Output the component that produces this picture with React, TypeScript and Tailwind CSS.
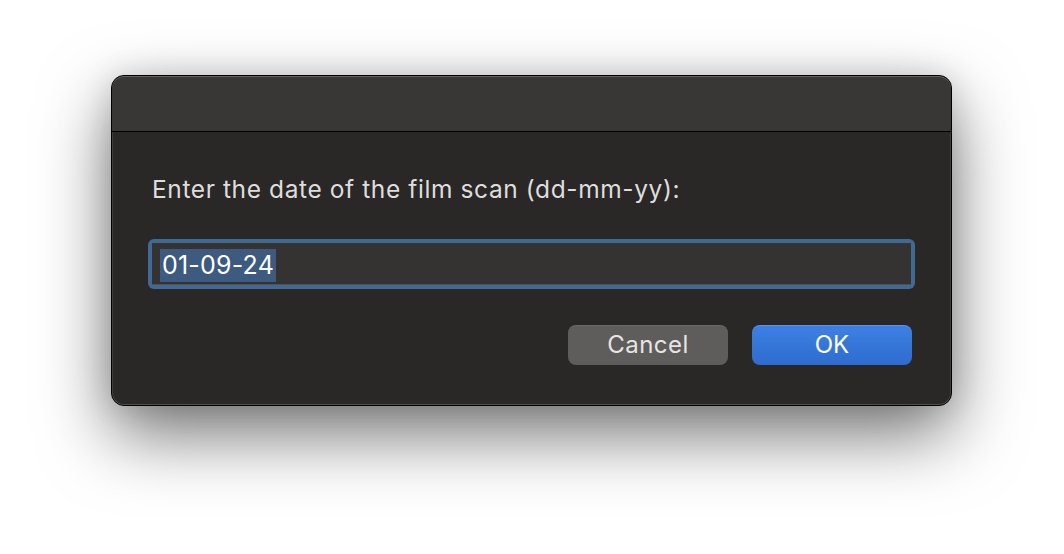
import React from "react";

export default function App() {
  return (
    <div className="w-[1064px] h-[554px] bg-white overflow-hidden pt-[75px] pl-[111px]" style={{ fontFamily: 'Inter, "Liberation Sans", Arial, sans-serif' }}>
      <div className="w-[841px] h-[331px] rounded-[13px] border border-black bg-[#292827] shadow-[0_28px_70px_rgba(0,0,0,0.55),0_0_30px_rgba(0,0,0,0.12)] flex flex-col overflow-hidden">
        <div className="h-[56px] shrink-0 bg-[#383736] border-b border-black rounded-t-[12px] shadow-[inset_0_1px_0_rgba(255,255,255,0.22)]"></div>
        <div className="flex-1 flex flex-col px-[36px] rounded-b-[12px] shadow-[inset_1px_0_0_rgba(255,255,255,0.1),inset_-1px_0_0_rgba(255,255,255,0.1),inset_0_-1px_0_rgba(255,255,255,0.18)]">
          <div className="mt-[43px] h-[28px] leading-[28px] text-[24.5px] tracking-[0.6px] text-[#dedddc] pl-[4px]">
            Enter the date of the film scan (dd-mm-yy):
          </div>
          <div className="mt-[36px] h-[50px] rounded-[6px] bg-[#3f6a96] p-[4px]">
            <div className="h-full bg-[#343332] shadow-[inset_0_-1px_0_rgba(255,255,255,0.15)] flex items-center pl-[8px]">
              <span className="bg-[#3d5a80] text-white text-[25px] tracking-[0.2px] leading-[33px] h-[33px] px-[2px] mt-[3px]">01-09-24</span>
            </div>
          </div>
          <div className="mt-[36px] flex justify-end gap-[24px] pr-[3px]">
            <button className="w-[160px] h-[40px] rounded-[8px] bg-[#5e5d5b] text-[#e6e5e4] text-[24px] tracking-[0.5px] leading-[40px] shadow-[inset_0_1px_0_rgba(255,255,255,0.08)]">
              Cancel
            </button>
            <button className="w-[160px] h-[40px] rounded-[8px] bg-gradient-to-b from-[#3d80e3] to-[#2f6ccf] text-white text-[24px] leading-[40px] shadow-[inset_0_1px_0_rgba(255,255,255,0.15)]">
              OK
            </button>
          </div>
        </div>
      </div>
    </div>
  );
}
